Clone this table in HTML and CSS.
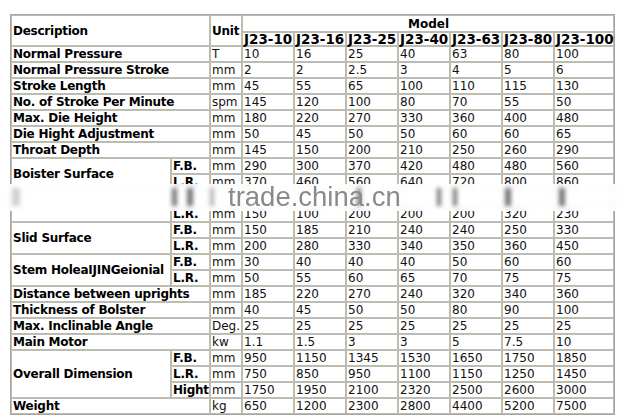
FILE: index.html
```html
<!DOCTYPE html>
<html>
<head>
<meta charset="utf-8">
<link rel="stylesheet" href="styles.css">
</head>
<body>
<div class="wrap">
<table class="spec">
<colgroup>
<col class="c-desc"><col class="c-sub"><col class="c-unit">
<col class="c-m1"><col class="c-m"><col class="c-m"><col class="c-m"><col class="c-m"><col class="c-m"><col class="c-mlast">
</colgroup>
<tr class="h1">
<th colspan="2" rowspan="2" class="lbl">Description</th>
<th rowspan="2" class="lbl">Unit</th>
<th colspan="7" class="model">Model</th>
</tr>
<tr class="h2">
<th class="mh">J23-10</th><th class="mh">J23-16</th><th class="mh">J23-25</th><th class="mh">J23-40</th><th class="mh">J23-63</th><th class="mh">J23-80</th><th class="mh">J23-100</th>
</tr>
<tr><th colspan="2" class="lbl">Normal Pressure</th><td>T</td><td>10</td><td>16</td><td>25</td><td>40</td><td>63</td><td>80</td><td>100</td></tr>
<tr><th colspan="2" class="lbl">Normal Pressure Stroke</th><td>mm</td><td>2</td><td>2</td><td>2.5</td><td>3</td><td>4</td><td>5</td><td>6</td></tr>
<tr><th colspan="2" class="lbl">Stroke Length</th><td>mm</td><td>45</td><td>55</td><td>65</td><td>100</td><td>110</td><td>115</td><td>130</td></tr>
<tr><th colspan="2" class="lbl">No. of Stroke Per Minute</th><td>spm</td><td>145</td><td>120</td><td>100</td><td>80</td><td>70</td><td>55</td><td>50</td></tr>
<tr><th colspan="2" class="lbl">Max. Die Height</th><td>mm</td><td>180</td><td>220</td><td>270</td><td>330</td><td>360</td><td>400</td><td>480</td></tr>
<tr><th colspan="2" class="lbl">Die Hight Adjustment</th><td>mm</td><td>50</td><td>45</td><td>50</td><td>50</td><td>60</td><td>60</td><td>65</td></tr>
<tr><th colspan="2" class="lbl">Throat Depth</th><td>mm</td><td>145</td><td>150</td><td>200</td><td>210</td><td>250</td><td>260</td><td>290</td></tr>
<tr><th rowspan="2" class="lbl">Boister Surface</th><th class="lbl">F.B.</th><td>mm</td><td>290</td><td>300</td><td>370</td><td>420</td><td>480</td><td>480</td><td>560</td></tr>
<tr><th class="lbl">L.R.</th><td>mm</td><td>370</td><td>460</td><td>560</td><td>640</td><td>720</td><td>800</td><td>860</td></tr>
<tr><th rowspan="2" class="lbl"></th><th class="lbl"></th><td></td><td></td><td></td><td></td><td></td><td></td><td></td><td></td></tr>
<tr><th class="lbl">L.R.</th><td>mm</td><td>150</td><td>100</td><td>200</td><td>200</td><td>200</td><td>320</td><td>230</td></tr>
<tr><th rowspan="2" class="lbl">Slid Surface</th><th class="lbl">F.B.</th><td>mm</td><td>150</td><td>185</td><td>210</td><td>240</td><td>240</td><td>250</td><td>330</td></tr>
<tr><th class="lbl">L.R.</th><td>mm</td><td>200</td><td>280</td><td>330</td><td>340</td><td>350</td><td>360</td><td>450</td></tr>
<tr><th rowspan="2" class="lbl">Stem HoleaIJINGeionial</th><th class="lbl">F.B.</th><td>mm</td><td>30</td><td>40</td><td>40</td><td>40</td><td>50</td><td>60</td><td>60</td></tr>
<tr><th class="lbl">L.R.</th><td>mm</td><td>50</td><td>55</td><td>60</td><td>65</td><td>70</td><td>75</td><td>75</td></tr>
<tr><th colspan="2" class="lbl">Distance between uprights</th><td>mm</td><td>185</td><td>220</td><td>270</td><td>240</td><td>320</td><td>340</td><td>360</td></tr>
<tr><th colspan="2" class="lbl">Thickness of Bolster</th><td>mm</td><td>40</td><td>45</td><td>50</td><td>50</td><td>80</td><td>90</td><td>100</td></tr>
<tr><th colspan="2" class="lbl">Max. Inclinable Angle</th><td>Deg.</td><td>25</td><td>25</td><td>25</td><td>25</td><td>25</td><td>25</td><td>25</td></tr>
<tr><th colspan="2" class="lbl">Main Motor</th><td>kw</td><td>1.1</td><td>1.5</td><td>3</td><td>3</td><td>5</td><td>7.5</td><td>10</td></tr>
<tr><th rowspan="3" class="lbl">Overall Dimension</th><th class="lbl">F.B.</th><td>mm</td><td>950</td><td>1150</td><td>1345</td><td>1530</td><td>1650</td><td>1750</td><td>1850</td></tr>
<tr><th class="lbl">L.R.</th><td>mm</td><td>750</td><td>850</td><td>950</td><td>1100</td><td>1150</td><td>1250</td><td>1450</td></tr>
<tr><th class="lbl">Hight</th><td>mm</td><td>1750</td><td>1950</td><td>2100</td><td>2320</td><td>2500</td><td>2600</td><td>3000</td></tr>
<tr><th colspan="2" class="lbl">Weight</th><td>kg</td><td>650</td><td>1200</td><td>2300</td><td>2800</td><td>4400</td><td>5200</td><td>7500</td></tr>
</table>
<div class="watermark">
<i class="blob b1"></i><i class="blob b2"></i><i class="blob b3"></i><i class="blob b4"></i><i class="blob b5"></i><i class="blob b6"></i><i class="blob b7"></i><i class="blob b8"></i><i class="blob b9"></i>
<span class="wm-text">trade.china.cn</span>
</div>
</div>
</body>
</html>
```
FILE: styles.css
```css
html, body {
  margin: 0;
  padding: 0;
  background: #fff;
}
body {
  width: 627px;
  height: 418px;
  overflow: hidden;
}
.wrap {
  position: relative;
  padding: 14px 0 0 10px;
}
.spec {
  table-layout: fixed;
  width: 605px;
  border-collapse: separate;
  border-spacing: 0;
  border: 1px solid #a6a69c;
  font-family: "DejaVu Sans", Verdana, sans-serif;
  font-size: 12px;
  color: #000;
}
.c-desc { width: 160px; }
.c-sub { width: 39px; }
.c-unit { width: 32px; }
.c-m1 { width: 52px; }
.c-m { width: 52px; }
.c-mlast { width: 60px; }
.spec th, .spec td {
  box-sizing: border-box;
  border: 1px solid #bcbcb1;
  padding: 1px 0 0 1px;
  height: 16px;
  line-height: 13px;
  text-align: left;
  vertical-align: middle;
  white-space: nowrap;
  overflow: hidden;
  font-weight: normal;
}
.spec td {
  color: #111;
}
.spec th.lbl {
  font-weight: bold;
  letter-spacing: -0.25px;
}
.h1 th { height: 17px; }
.h2 th { height: 14px; }
.spec th.model {
  font-weight: bold;
  text-align: center;
  padding-top: 2px;
}
.spec th.mh {
  font-weight: bold;
  font-size: 13.5px;
  line-height: 12px;
  padding: 0 0 0 1px;
  overflow: visible;
}
.watermark {
  position: absolute;
  left: 0;
  top: 184px;
  width: 627px;
  height: 27px;
  background: rgba(255, 255, 255, 0.88);
  backdrop-filter: blur(3px);
}
.blob {
  position: absolute;
  top: 4px;
  width: 5px;
  height: 18px;
  background: rgba(60, 60, 60, 0.7);
  filter: blur(2.2px);
}
.b1 { left: 172px; }
.b2 { left: 187px; width: 6px; }
.b3 { left: 210px; width: 4px; background: rgba(70, 70, 70, 0.4); }
.b4 { left: 12px; width: 8px; background: rgba(70, 70, 70, 0.25); }
.b5 { left: 357px; width: 4px; }
.b6 { left: 437px; width: 4px; }
.b7 { left: 453px; width: 4px; }
.b8 { left: 505px; width: 6px; }
.b9 { left: 559px; width: 6px; }
.wm-text {
  position: absolute;
  left: 228px;
  top: -4px;
  font-family: "Liberation Sans", Arial, sans-serif;
  font-size: 27.5px;
  line-height: 33px;
  color: #8a8a8a;
  filter: blur(0.4px);
}
```
